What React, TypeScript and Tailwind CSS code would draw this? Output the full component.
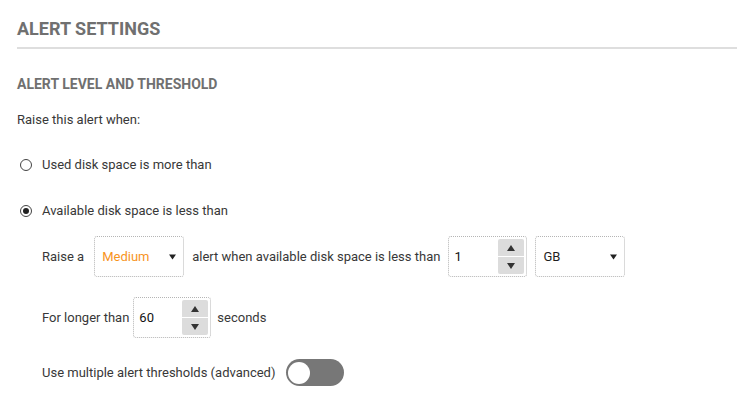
const Caret = () => (
  <svg width="7" height="6" viewBox="0 0 7 6" className="shrink-0">
    <path d="M0 0.5h7L3.5 5.5z" fill="#222" />
  </svg>
);

const Select = ({ value, accent }: { value: string; accent?: boolean }) => (
  <div className="flex items-center justify-between w-[90px] h-[41px] pl-[7px] pr-[7px] border border-dotted border-[#b5b5b5] rounded-[3px] bg-white">
    <span className={accent ? "text-[#f7941d]" : "text-[#1e1e1e]"}>{value}</span>
    <Caret />
  </div>
);

const NumberInput = ({ value, width }: { value: string; width: string }) => (
  <div className={`flex items-stretch h-[41px] border border-dotted border-[#b5b5b5] rounded-[3px] bg-white ${width}`}>
    <span className="flex-1 flex items-center pl-[5px] text-[#111]">{value}</span>
    <div className="flex flex-col w-[26px] my-[2px] mr-[2px] rounded-[2px] overflow-hidden gap-px">
      <div className="flex-1 bg-[#dcdcdc] flex items-center justify-center">
        <svg width="8" height="6" viewBox="0 0 8 6">
          <path d="M0 6h8L4 0z" fill="#333" />
        </svg>
      </div>
      <div className="flex-1 bg-[#dcdcdc] flex items-center justify-center">
        <svg width="8" height="6" viewBox="0 0 8 6">
          <path d="M0 0h8L4 6z" fill="#333" />
        </svg>
      </div>
    </div>
  </div>
);

const Radio = ({ checked, label }: { checked?: boolean; label: string }) => (
  <div className="flex items-center leading-4">
    <span className="ml-[3px] w-[12px] h-[12px] rounded-full border-[1.5px] border-[#444] flex items-center justify-center bg-white">
      {checked && <span className="w-[6px] h-[6px] rounded-full bg-[#222]" />}
    </span>
    <span className="ml-[10px]">{label}</span>
  </div>
);

export default function App() {
  return (
    <div className="min-h-[414px] bg-white pl-[17px] pt-[17px] text-[13px] text-[#383838] font-['Roboto',sans-serif]">
      <div className="border-b-2 border-[#dedede] pb-[6px]">
        <h1 className="text-[18px] leading-6 font-bold text-[#707070]">ALERT SETTINGS</h1>
      </div>

      <h2 className="mt-[27px] text-[14px] leading-4 font-bold text-[#707070]">ALERT LEVEL AND THRESHOLD</h2>
      <p className="mt-[20px] leading-4">Raise this alert when:</p>

      <div className="mt-[29px]">
        <Radio label="Used disk space is more than" />
      </div>
      <div className="mt-[30px]">
        <Radio checked label="Available disk space is less than" />
      </div>

      <div className="pl-[25px]">
        <div className="mt-[17px] flex items-center gap-[8px]">
          <span className="mr-[2px]">Raise a</span>
          <Select value="Medium" accent />
          <span>alert when available disk space is less than</span>
          <NumberInput value="1" width="w-[79px]" />
          <Select value="GB" />
        </div>

        <div className="mt-[20px] flex items-center gap-[4px]">
          <span>For longer than</span>
          <NumberInput value="60" width="w-[78px]" />
          <span className="ml-[2px]">seconds</span>
        </div>

        <div className="mt-[21px] flex items-center gap-[11px]">
          <span>Use multiple alert thresholds (advanced)</span>
          <div className="w-[58px] h-[27px] rounded-full bg-[#777] flex items-center pl-[2px]">
            <span className="w-[22px] h-[22px] rounded-full bg-white" />
          </div>
        </div>
      </div>
    </div>
  );
}
